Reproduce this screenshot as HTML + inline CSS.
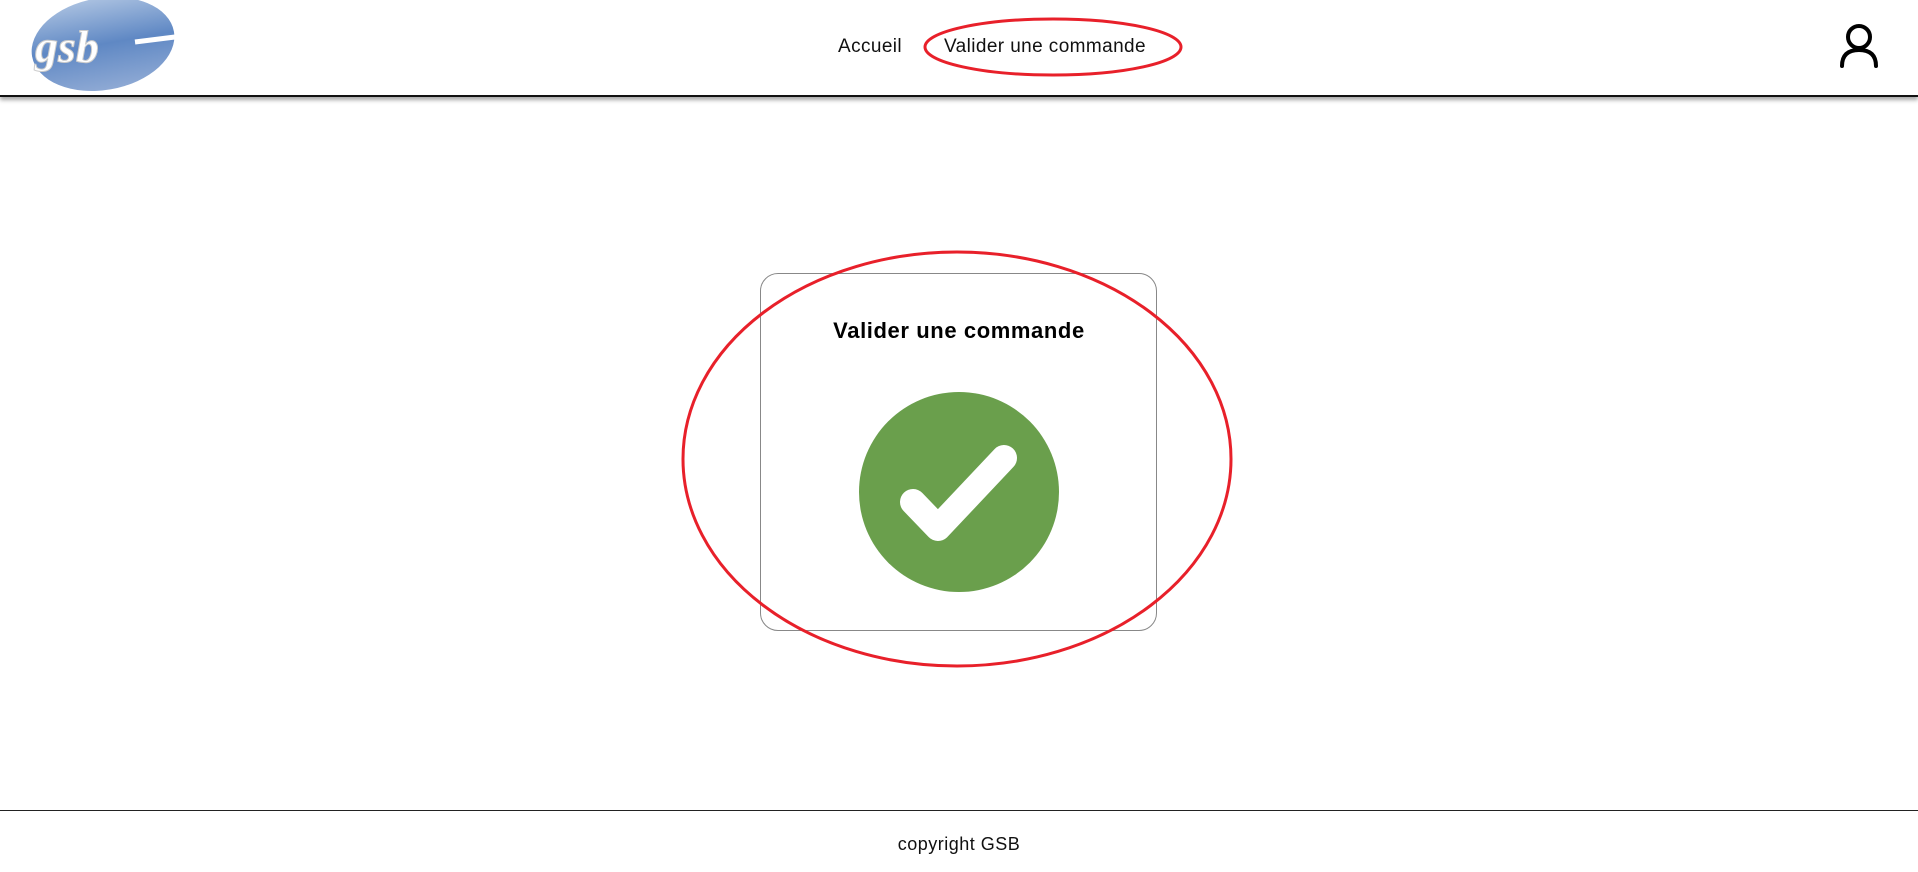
<!DOCTYPE html>
<html><head><meta charset="utf-8"><style>
body{margin:0;width:1918px;height:872px;background:#fff;position:relative;overflow:hidden;font-family:"Liberation Sans",sans-serif;}
.hdr{position:absolute;left:0;top:0;width:1918px;height:95px;border-bottom:2px solid #111;box-shadow:0 3px 4px rgba(0,0,0,0.35);}
.nav{position:absolute;top:36px;font-size:19px;color:#111;letter-spacing:0.4px;}
.card{position:absolute;left:760px;top:273px;width:397px;height:358px;border:1px solid #888;border-radius:18px;box-sizing:border-box;}
.title{position:absolute;left:0;width:100%;top:318px;text-align:center;font-weight:bold;font-size:22px;color:#000;letter-spacing:0.6px;}
.foot{position:absolute;left:0;top:810px;width:1918px;border-top:1px solid #222;}
.ft{position:absolute;top:834px;width:1918px;text-align:center;font-size:18px;color:#111;letter-spacing:0.5px;}
</style></head><body>
<div class="hdr"></div>
<svg style="position:absolute;left:25px;top:0" width="160" height="92" viewBox="0 0 160 92">
<defs><linearGradient id="g" x1="0" y1="0" x2="0" y2="1"><stop offset="0" stop-color="#a9c0e0"/><stop offset="0.5" stop-color="#5f88c4"/><stop offset="1" stop-color="#8ea9d4"/></linearGradient></defs>
<ellipse cx="78" cy="44" rx="72" ry="46" fill="url(#g)" transform="rotate(-10 78 44)"/>
<text x="10" y="62" font-family="Liberation Serif" font-style="italic" font-weight="bold" font-size="46" fill="#fff" stroke="#ccc" stroke-width="1">gsb</text>
<path d="M110 42 L158 36" stroke="#fff" stroke-width="5"/>
</svg>
<div class="nav" style="left:838px">Accueil</div>
<div class="nav" style="left:944px">Valider une commande</div>
<svg style="position:absolute;left:920px;top:15px" width="266" height="64"><ellipse cx="133" cy="32" rx="128" ry="28" fill="none" stroke="#e8202a" stroke-width="3"/></svg>
<svg style="position:absolute;left:1834px;top:22px" width="50" height="48" viewBox="0 0 50 48">
<circle cx="25" cy="15" r="11" fill="none" stroke="#000" stroke-width="4"/>
<path d="M8 44 Q8 28 25 28 Q42 28 42 44" fill="none" stroke="#000" stroke-width="4" stroke-linecap="round"/>
<path d="M17 44 H33" stroke="#fff" stroke-width="4"/>
</svg>
<div class="card"></div>
<div class="title">Valider une commande</div>
<svg style="position:absolute;left:859px;top:392px" width="200" height="200" viewBox="-100 -100 200 200">
<circle r="100" fill="#6a9f4c"/>
<polyline points="-46,10 -21,36 45,-34" fill="none" stroke="#fff" stroke-width="26" stroke-linecap="round" stroke-linejoin="round"/>
</svg>
<svg style="position:absolute;left:680px;top:248px" width="554" height="422"><ellipse cx="277" cy="211" rx="274" ry="207" fill="none" stroke="#e8202a" stroke-width="3"/></svg>
<div class="foot"></div>
<div class="ft">copyright GSB</div>
</body></html>
